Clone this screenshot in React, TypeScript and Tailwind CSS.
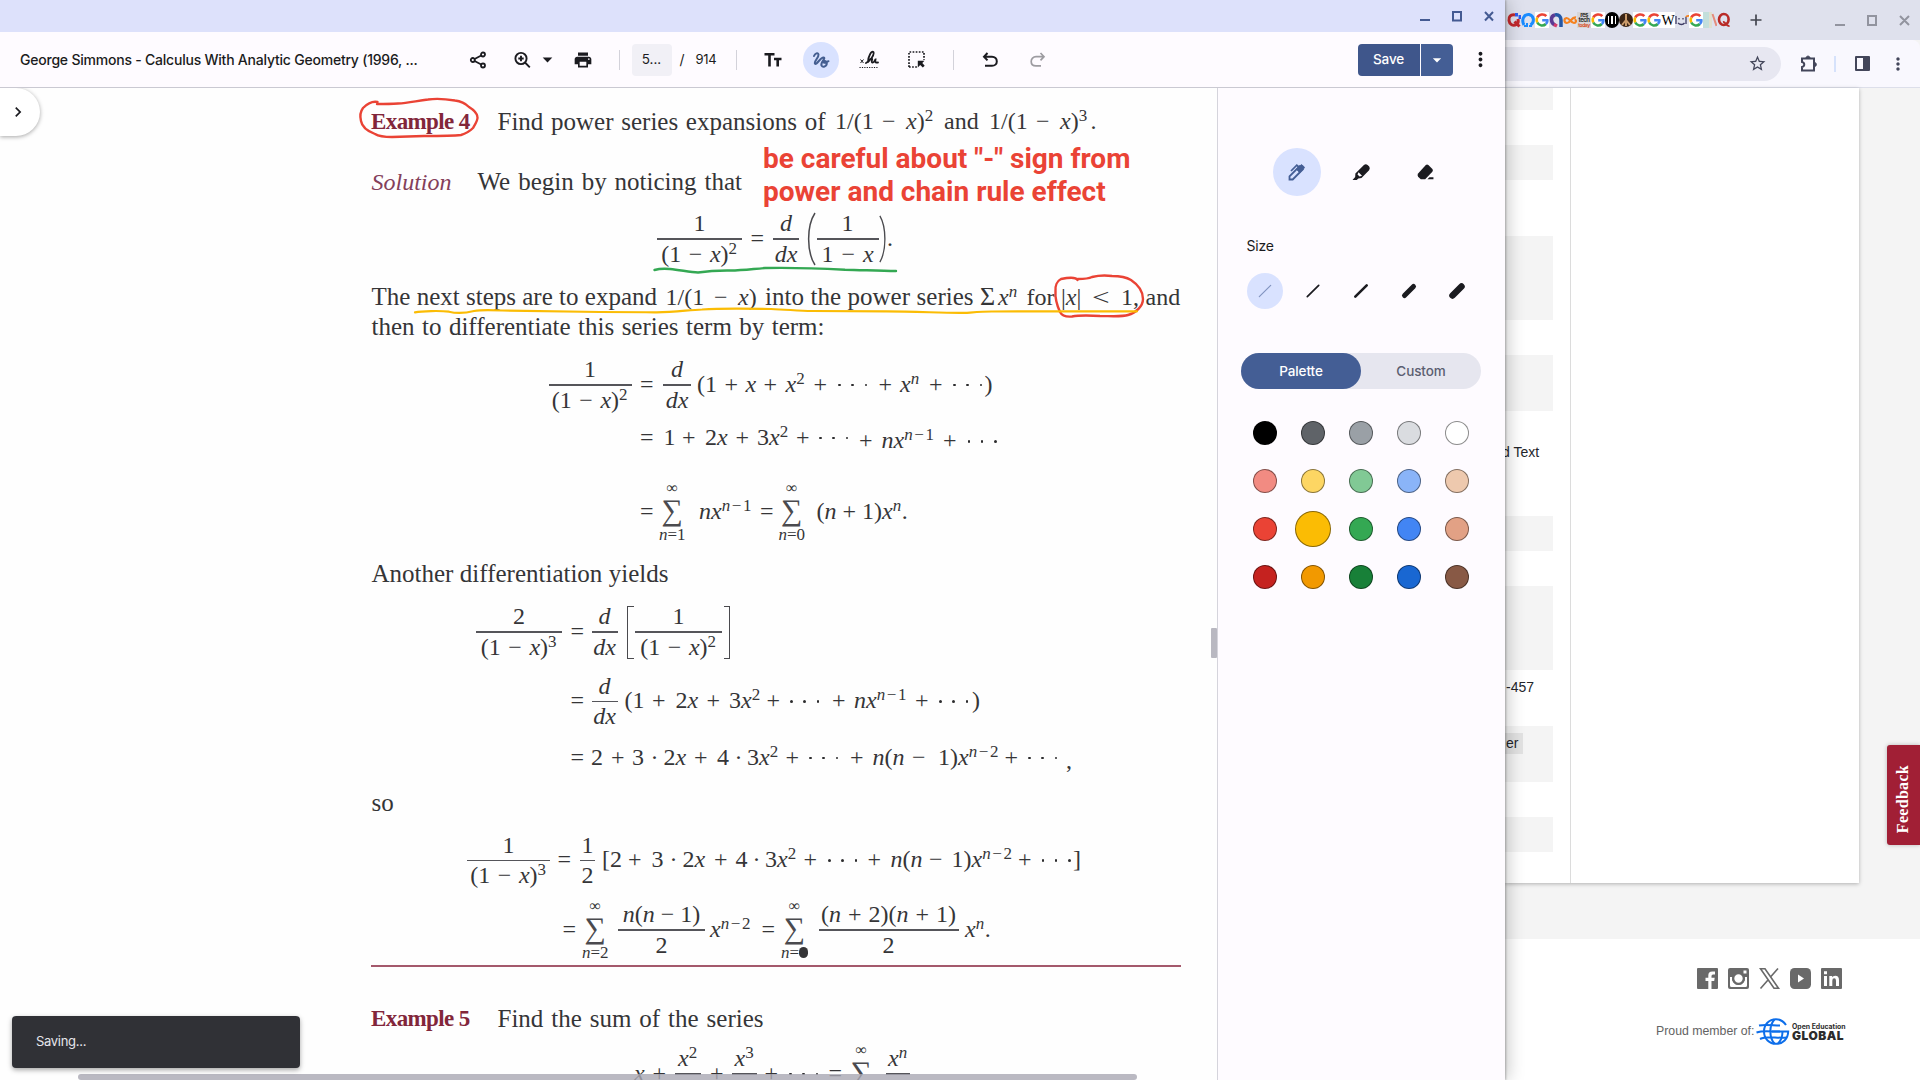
import React from "react";
import type { ReactNode } from "react";
import {
  MdArrowDropDown,
  MdPrint,
  MdMoreVert,
  MdChevronRight,
  MdStarBorder,
} from "react-icons/md";

type Token = [number, ReactNode];

const ORIGIN = 371;

/* A line of the book page: every token starts at its own column. */
function Line({ tokens, className }: { tokens: Token[]; className: string }) {
  return (
    <div className={`flex shrink-0 items-center ${className}`}>
      <span className="shrink-0" style={{ width: tokens[0][0] - ORIGIN }} />
      {tokens.map(([x, node], i) => {
        const next = tokens[i + 1];
        return (
          <span
            key={i}
            className="flex shrink-0 items-center whitespace-nowrap"
            style={next ? { width: next[0] - x } : undefined}
          >
            {node}
          </span>
        );
      })}
    </div>
  );
}

function M({ children, low }: { children: ReactNode; low?: boolean }) {
  return <span className={`block text-[24px] leading-none ${low ? "pt-[4px]" : "pb-[3px]"}`}>{children}</span>;
}

function Sup({ children }: { children: ReactNode }) {
  return <span className="relative -top-[8px] text-[17px] leading-none tracking-[0.6px]">{children}</span>;
}

/* Exponent made of several terms, set a little looser. */
function WideSup({ children }: { children: ReactNode }) {
  return <span className="relative -top-[8px] text-[17px] leading-none tracking-[1.6px]">{children}</span>;
}

const X = () => <i>x</i>;
const N = () => <i>n</i>;

function Dots({ low }: { low?: boolean }) {
  return (
    <span className={`flex w-[29px] justify-between ${low ? "pt-[7px]" : ""}`}>
      <b className="size-[2.500px] rounded-full bg-[#2c2c2e]" />
      <b className="size-[2.500px] rounded-full bg-[#2c2c2e]" />
      <b className="size-[2.500px] rounded-full bg-[#2c2c2e]" />
    </span>
  );
}

function Frac({ w, num, den }: { w: number; num: ReactNode; den: ReactNode }) {
  return (
    <span className="flex flex-col items-stretch text-center text-[24px] leading-[24px]" style={{ width: w }}>
      <span className="h-[28px] pt-px">{num}</span>
      <span className="h-[1.5px] bg-[#55555a]" />
      <span className="flex h-[28px] justify-center pt-[2px]">
        <span>{den}</span>
      </span>
    </span>
  );
}

function OneMinusX({ p }: { p: string }) {
  return (
    <span className="whitespace-nowrap [word-spacing:1.5px]">
      (1 − <X />)<Sup>{p}</Sup>
    </span>
  );
}

function Sum({ children }: { children: ReactNode }) {
  return (
    <span className="flex flex-col items-center">
      <span className="h-[12px] text-[16px] leading-[12px]">∞</span>
      <span className="my-[2px] h-[30px] text-[30px] leading-[28px] text-[#4a4a4e]">∑</span>
      <span className="h-[14px] text-[17px] leading-[14px]">{children}</span>
    </span>
  );
}

function Words({ children, className }: { children: ReactNode; className: string }) {
  return (
    <span className={`block pb-[3px] text-[25px] leading-none whitespace-nowrap [text-align-last:justify] ${className}`}>
      {children}
    </span>
  );
}

function Heading({ children }: { children: ReactNode }) {
  return (
    <span className="block w-[99px] pb-[2px] text-[23px] leading-none font-bold tracking-[-0.6px] whitespace-nowrap text-[#82263a]">
      {children}
    </span>
  );
}

const DDX = (w: number) => <Frac w={w} num={<i>d</i>} den={<i>dx</i>} />;

function Annotations() {
  return (
    <svg
      className="pointer-events-none absolute inset-0"
      width="1217"
      height="992"
      viewBox="0 88 1217 992"
      fill="none"
      strokeLinecap="round"
      strokeLinejoin="round"
    >
      <g stroke="#ea4335" strokeWidth="2.4">
        <path d="M377.500 102C373 101 368 103 363 108C360 112 360 117 361 121C362 127 367 131 375 134C380 137 386 137 392 137L424 136C440 136 452 136 461 135C468 133 470 131 473 128C476 123 478 120 477.500 117C477 113 474 110 469 107C465 103 460 101 455 100.500C446 99 438 98 428 99.500C416 101 408 103 398 103.500C390 104 384 104 377 104" />
        <path d="M1077.500 280C1076 277 1071 277 1061 279C1057 281 1055 286 1055.500 291C1055 297 1056 303 1060 312C1062 316 1066 317 1072 316.500C1080 315 1092 315.500 1100 316C1110 316 1122 317 1128 315C1136 313 1143 306 1143 299C1143 292 1140 286 1131 280C1126 277 1120 276 1112 276C1104 275 1096 276 1092 277C1088 279 1082 279 1078 279" />
      </g>
      <path
        stroke="#34a853"
        strokeWidth="2.4"
        d="M654.500 270C658 269 664 268.500 670 269C680 270 690 272 698 272.500C708 271 718 270.500 727 270.500C740 271 752 269 765 268C790 267.500 822 268.500 845 269.700C862 270 880 271 896 271"
      />
      <path
        stroke="#fbbc04"
        strokeWidth="2.2"
        d="M415 312.300C422 311 440 310.500 449 311.700C458 314 466 313 474 311C482 309.500 492 310 502 310.500C530 311 560 311.500 600 312C620 312 640 312 655 312.300C674 312.500 688 310 702 309.500C722 308 750 308.500 771 309C786 309.500 798 310.700 812 311C840 311 866 311 886 311.300C920 311.500 950 313.500 967 312.800C978 312 984 311.500 992 311.500L1137 311.300"
      />
    </svg>
  );
}

function BookPage() {
  return (
    <div className="flex w-[846px] flex-col pt-px pl-[371px] font-['Liberation_Serif',serif] text-[#353537]">
      <Line
        className="h-[67px]"
        tokens={[
          [371, <Heading>Example 4</Heading>],
          [497.500, <Words className="w-[328px]">Find power series expansions of</Words>],
          [835, <M>1/(1</M>],
          [882, <M>−</M>],
          [906, <M><X />)<Sup>2</Sup></M>],
          [944, <M>and</M>],
          [989, <M>1/(1</M>],
          [1036, <M>−</M>],
          [1060, <M><X />)<Sup>3</Sup></M>],
          [1090.500, <M>.</M>],
        ]}
      />
      <Line
        className="h-[54px]"
        tokens={[
          [371.500, <i className="pb-[3px] text-[24px] leading-none text-[#84405a]">Solution</i>],
          [477.500, <Words className="w-[264.500px]">We begin by noticing that</Words>],
        ]}
      />
      <Line
        className="h-[58px]"
        tokens={[
          [657, <Frac w={85} num="1" den={<OneMinusX p="2" />} />],
          [750.500, <M>=</M>],
          [773, DDX(26)],
          [807, <svg width="9" height="54" viewBox="0 0 9 54" fill="none" stroke="#4a4a4e" strokeWidth="1.5"><path d="M8 1C-0.500 14 -0.500 40 8 53" /></svg>],
          [816.500, <Frac w={62} num="1" den={<span className="[word-spacing:2px]">1 − <X /></span>} />],
          [879, <svg width="9" height="54" viewBox="0 0 9 54" fill="none" stroke="#4a4a4e" strokeWidth="1.5"><path d="M1 1C8.500 14 8.500 40 1 53" /></svg>],
          [887, <M>.</M>],
        ]}
      />
      <Line
        className="mt-[16px] h-[28px]"
        tokens={[
          [371.500, <Words className="w-[285.500px]">The next steps are to expand</Words>],
          [665.500, <M>1/(1</M>],
          [714, <M>−</M>],
          [738, <M><X />)</M>],
          [765, <Words className="w-[208.500px]">into the power series</Words>],
          [980, <span className="block pb-[3px] text-[26px] leading-none">Σ</span>],
          [998, <M><X /><Sup><N /></Sup></M>],
          [1026.500, <M>for</M>],
          [1061, <M>|<X />|</M>],
          [1092, <span className="block origin-left scale-x-130 pb-[2px] text-[24px] leading-none">&lt;</span>],
          [1121, <M>1,</M>],
          [1145.500, <M>and</M>],
        ]}
      />
      <Line
        className="h-[32px]"
        tokens={[[371.500, <Words className="w-[453px]">then to differentiate this series term by term:</Words>]]}
      />
      <Line
        className="h-[82px]"
        tokens={[
          [548.500, <Frac w={83} num="1" den={<OneMinusX p="2" />} />],
          [640, <M>=</M>],
          [663, DDX(28)],
          [697, <M>(1</M>],
          [724.500, <M>+</M>],
          [745.500, <M><X /></M>],
          [763.500, <M>+</M>],
          [785.500, <M><X /><Sup>2</Sup></M>],
          [813.500, <M>+</M>],
          [838, <Dots />],
          [878.500, <M>+</M>],
          [900, <M><X /><Sup><N /></Sup></M>],
          [929, <M>+</M>],
          [953, <Dots />],
          [984.500, <M>)</M>],
        ]}
      />
      <Line
        className="h-[24px]"
        tokens={[
          [640, <M>=</M>],
          [663.500, <M>1</M>],
          [682, <M>+</M>],
          [705, <M>2<X /></M>],
          [735.500, <M>+</M>],
          [757, <M>3<X /><Sup>2</Sup></M>],
          [796, <M>+</M>],
          [819, <Dots />],
          [859, <M low>+</M>],
          [881.500, <M low><N /><X /><WideSup><N />−1</WideSup></M>],
          [943, <M low>+</M>],
          [967.500, <Dots low />],
        ]}
      />
      <Line
        className="mt-[30px] h-[64px]"
        tokens={[
          [640, <M>=</M>],
          [659, <Sum><N />=1</Sum>],
          [699, <M><N /><X /><WideSup><N />−1</WideSup></M>],
          [760, <M>=</M>],
          [778.500, <Sum><N />=0</Sum>],
          [816.500, <M>(<N /> + 1)<X /><Sup><N /></Sup>.</M>],
        ]}
      />
      <Line
        className="h-[62px]"
        tokens={[[371.500, <Words className="w-[297px]">Another differentiation yields</Words>]]}
      />
      <Line
        className="h-[52px]"
        tokens={[
          [476, <Frac w={86} num="2" den={<OneMinusX p="3" />} />],
          [570.500, <M>=</M>],
          [591.500, DDX(26)],
          [627, <span className="block h-[53px] w-[7px] border-y-[1.5px] border-l-[1.5px] border-[#4a4a4e]" />],
          [635, <Frac w={87} num="1" den={<OneMinusX p="2" />} />],
          [723.500, <span className="block h-[53px] w-[6.500px] border-y-[1.5px] border-r-[1.5px] border-[#4a4a4e]" />],
        ]}
      />
      <Line
        className="mt-[13px] h-[61px]"
        tokens={[
          [570.500, <M>=</M>],
          [591.500, DDX(26)],
          [624.500, <M>(1</M>],
          [652, <M>+</M>],
          [675.500, <M>2<X /></M>],
          [706.500, <M>+</M>],
          [729, <M>3<X /><Sup>2</Sup></M>],
          [766.500, <M>+</M>],
          [790, <Dots />],
          [832, <M>+</M>],
          [854, <M><N /><X /><WideSup><N />−1</WideSup></M>],
          [915, <M>+</M>],
          [939, <Dots />],
          [972, <M>)</M>],
        ]}
      />
      <Line
        className="mt-px h-[50px]"
        tokens={[
          [570.500, <M>=</M>],
          [591, <M>2</M>],
          [611, <M>+</M>],
          [632, <M>3</M>],
          [650.500, <M>·</M>],
          [663.500, <M>2<X /></M>],
          [694, <M>+</M>],
          [717, <M>4</M>],
          [734.500, <M>·</M>],
          [747, <M>3<X /><Sup>2</Sup></M>],
          [785.500, <M>+</M>],
          [809, <Dots />],
          [850, <M>+</M>],
          [872.500, <M><N />(<N /></M>],
          [912, <M>−</M>],
          [938, <M>1)<X /><WideSup><N />−2</WideSup></M>],
          [1004.500, <M>+</M>],
          [1028, <Dots />],
          [1066, <span className="block pt-[3px] text-[24px] leading-none">,</span>],
        ]}
      />
      <Line className="h-[42px]" tokens={[[371.500, <Words className="w-[23px]">so</Words>]]} />
      <Line
        className="mt-[5px] h-[61px]"
        tokens={[
          [467, <Frac w={83} num="1" den={<OneMinusX p="3" />} />],
          [557.500, <M>=</M>],
          [580, <Frac w={15} num="1" den="2" />],
          [602, <M>[2</M>],
          [628, <M>+</M>],
          [651.500, <M>3</M>],
          [669.500, <M>·</M>],
          [682.500, <M>2<X /></M>],
          [714, <M>+</M>],
          [735.500, <M>4</M>],
          [752.500, <M>·</M>],
          [765, <M>3<X /><Sup>2</Sup></M>],
          [803.500, <M>+</M>],
          [828, <Dots />],
          [867.500, <M>+</M>],
          [890.500, <M><N />(<N /></M>],
          [929, <M>−</M>],
          [951.500, <M>1)<X /><WideSup><N />−2</WideSup></M>],
          [1018, <M>+</M>],
          [1041.500, <Dots />],
          [1073, <M>]</M>],
        ]}
      />
      <Line
        className="mt-[9px] h-[60px]"
        tokens={[
          [562.500, <M>=</M>],
          [582, <Sum><N />=2</Sum>],
          [618, <Frac w={87} num={<span><N />(<N /> − 1)</span>} den="2" />],
          [710, <M><X /><WideSup><N />−2</WideSup></M>],
          [761.500, <M>=</M>],
          [781, <Sum><N />=<span className="inline-block h-[11px] w-[9px] rounded-full bg-[#353537]" /></Sum>],
          [818.500, <Frac w={140} num={<span className="[word-spacing:1px]">(<N /> + 2)(<N /> + 1)</span>} den="2" />],
          [965, <M><X /><Sup><N /></Sup>.</M>],
        ]}
      />
      <div className="mt-[5px] h-[2px] w-[809.500px] shrink-0 bg-[#a4596c]" />
      <Line
        className="mt-[27px] h-[51px]"
        tokens={[
          [371, <Heading>Example 5</Heading>],
          [497.500, <Words className="w-[266px]">Find the sum of the series</Words>],
        ]}
      />
      <Line
        className="-mt-px h-[60px]"
        tokens={[
          [634, <M><X /></M>],
          [652.500, <M>+</M>],
          [675, <Frac w={26} num={<span><X /><Sup>2</Sup></span>} den="2" />],
          [710, <M>+</M>],
          [732, <Frac w={25} num={<span><X /><Sup>3</Sup></span>} den="3" />],
          [764.500, <M>+</M>],
          [789, <Dots />],
          [828.500, <M>=</M>],
          [848, <Sum><N />=1</Sum>],
          [886, <Frac w={24} num={<span><X /><Sup><N /></Sup></span>} den={<N />} />],
        ]}
      />
    </div>
  );
}

function UndoIcon() {
  return (
    <svg width="16" height="16" viewBox="0 0 16 16" fill="none" stroke="currentColor" strokeWidth="2">
      <path d="M5.500 1L2 4.700L5.500 8.400M2.200 4.700H10C12.800 4.700 14.800 6.800 14.800 9.400C14.800 12 12.800 13.800 10 13.800H3" />
    </svg>
  );
}

function ViewerToolbar() {
  const slot = "flex size-9 shrink-0 items-center justify-center";
  const rule = "h-5 w-px shrink-0 bg-[#d3d2da]";
  return (
    <div className="flex h-[56px] shrink-0 items-center border-b border-[#cac9d2] bg-[#fefbff] text-[#1b1b20]">
      <div className="ml-[20px] w-[439.500px] text-[14px] leading-5 font-medium tracking-[-0.22px] whitespace-nowrap">
        George Simmons - Calculus With Analytic Geometry (1996, ...
      </div>
      <div className={slot}>
        <svg width="18" height="18" viewBox="0 0 18 18" fill="none" stroke="currentColor" strokeWidth="1.800">
          <circle cx="14" cy="3.500" r="2" />
          <circle cx="14" cy="14.500" r="2" />
          <circle cx="3.800" cy="9" r="2" />
          <path d="M5.600 8L12.200 4.500M5.600 10L12.200 13.500" />
        </svg>
      </div>
      <div className={`${slot} ml-[8px]`}>
        <svg width="18" height="18" viewBox="0 0 18 18" fill="none" stroke="currentColor" strokeWidth="1.900">
          <circle cx="8" cy="7.500" r="5.600" />
          <path d="M12 11.500L16.800 16.300M8 4.800V10.200M5.300 7.500H10.700" />
        </svg>
      </div>
      <MdArrowDropDown className="-ml-[4px] size-[23px] shrink-0" />
      <div className={`${slot} ml-[6px]`}>
        <MdPrint className="size-[20px]" />
      </div>
      <div className={`${rule} ml-[18px]`} />
      <div className="ml-[12px] flex h-8 w-10 shrink-0 items-center justify-center rounded bg-[#f1f0f6] text-[13.5px]">5...</div>
      <div className="ml-[8px] text-[14px]">/</div>
      <div className="ml-[11px] w-[21px] text-[13px] tracking-[-0.3px]">914</div>
      <div className={`${rule} ml-[19px]`} />
      <div className={`${slot} ml-[18.500px]`}>
        <svg width="18" height="16" viewBox="0 0 18 16" fill="none" stroke="currentColor" strokeWidth="2.600">
          <path d="M0.500 2.300H10.500M5.500 2.300V14.500M10 7H17.500M13.700 7V14.500" />
        </svg>
      </div>
      <div className={`${slot} ml-[12px] rounded-full bg-[#d9e2ff] text-[#445e91]`}>
        <svg width="18" height="18" viewBox="0 0 18 18" fill="none" stroke="currentColor" strokeWidth="2" strokeLinecap="round">
          <path d="M2 5C3 2.500 6 1 6.500 3.500C7 6.500 1.500 10.500 3 12.700C4.500 14.500 8.500 6.200 11.500 6.500C14.500 7 8 11.500 9.500 14.500C11 17 15 15 14.800 12C14.600 9.500 11.500 9.500 11.600 11.200C12 12.400 14.500 11.200 16.500 10.200" />
        </svg>
      </div>
      <div className={`${slot} ml-[11.500px]`}>
        <svg width="20" height="20" viewBox="0 0 20 20" fill="none" stroke="currentColor">
          <path strokeWidth="1" d="M1.500 9.500L4.500 13M4.500 9.500L1.500 13" />
          <path strokeWidth="1.800" strokeLinecap="round" d="M7 13C11 11 15.500 5 14.500 2.200C12.500 0 8.800 7 9 12.500C10.500 9 13 7.500 13.200 9.200C12.500 11.500 12.500 13 14 12.500C15.500 12 16 9.500 16.500 9.500C16 12 16.500 13 19 12.500" />
          <path strokeWidth="1.200" strokeDasharray="1.200 1.200" d="M0.500 17.500H19.500" />
        </svg>
      </div>
      <div className={`${slot} ml-[12px]`}>
        <svg width="17" height="17" viewBox="0 0 17 17" fill="none">
          <path stroke="currentColor" strokeWidth="1.700" strokeDasharray="1.700 1.400" d="M1 16V1H16V9M1 16H9" />
          <path fill="currentColor" d="M9.800 9.800H16.500L14.300 12L16.700 14.700L14.800 16.600L12.200 14L9.800 16.400Z" />
        </svg>
      </div>
      <div className={`${rule} ml-[18px]`} />
      <div className={`${slot} ml-[18px]`}>
        <UndoIcon />
      </div>
      <div className={`${slot} ml-[12px] text-[#9d9ca1]`}>
        <svg width="16" height="16" viewBox="0 0 16 16" fill="none" stroke="currentColor" strokeWidth="1.700">
          <path d="M10.500 1L14 4.700L10.500 8.400M13.800 4.700H6C3.200 4.700 1.200 6.800 1.200 9.400C1.200 12 3.200 13.800 6 13.800H11" />
        </svg>
      </div>
      <div className="ml-[302px] flex h-8 w-[95px] shrink-0 overflow-hidden rounded text-white">
        <div className="flex w-[62px] items-center justify-center bg-[#3f568b] text-[13.5px] font-medium tracking-[-0.1px]">Save</div>
        <div className="ml-px flex w-[32px] items-center justify-center bg-[#445e95]">
          <MdArrowDropDown className="size-[20px]" />
        </div>
      </div>
      <div className={`${slot} ml-[10px]`}>
        <MdMoreVert className="size-[23px]" />
      </div>
    </div>
  );
}

const SWATCHES = [
  ["#000000", "#5f6368", "#9aa0a6", "#dadce0", "#ffffff"],
  ["#f28b82", "#fdd663", "#81c995", "#8ab4f8", "#eec9ae"],
  ["#ea4335", "#fbbc04", "#34a853", "#4285f4", "#e2a185"],
  ["#c5221f", "#f29900", "#188038", "#1967d2", "#885945"],
];

function Swatch({ color, selected }: { color: string; selected: boolean }) {
  return (
    <span className="flex size-[48px] items-center justify-center">
      <span
        className={`rounded-full border border-black/45 ${selected ? "size-9" : "size-6"}`}
        style={{ backgroundColor: color }}
      />
    </span>
  );
}

function AnnotationPanel() {
  return (
    <aside className="flex w-[288px] shrink-0 flex-col border-l border-[#d5d4dc] bg-[#fefbff] text-[#1b1b20]">
      <div className="mt-[60px] ml-[55px] flex gap-[16px]">
        <span className="flex size-12 items-center justify-center rounded-full bg-[#d9e2ff] text-[#445e95]">
          <svg width="18" height="18" viewBox="0 0 18 18" fill="none" stroke="currentColor">
            <path strokeWidth="1.800" d="M1.500 16.500V13.300L11.500 3.300L14.700 6.500L4.700 16.500Z" />
            <path fill="currentColor" strokeWidth="1" d="M8.500 6.300L12.800 2L14 1.800L16.200 4L16.200 5.200L11.700 9.500Z" />
            <path strokeWidth="1.700" d="M3 8L8.800 2.200L10.800 4" />
          </svg>
        </span>
        <span className="flex size-12 items-center justify-center">
          <svg width="19" height="19" viewBox="0 0 18 18">
            <path
              fill="currentColor"
              d="M11.300 2Q13 0.500 14.800 1.900L16.300 3.400Q17.500 5.100 16.200 6.800L9 14.200L6 14.800L4.500 16H0.500L3 13.300L3.200 10ZM6.200 8.800L5.200 11L7.200 12.900L9.500 12Z"
              fillRule="evenodd"
            />
          </svg>
        </span>
        <span className="flex size-12 items-center justify-center">
          <svg width="19" height="19" viewBox="0 0 18 18" fill="currentColor">
            <path d="M9.300 2Q10.500 0.900 11.700 2L15.500 5.700Q16.600 7 15.500 8.200L8.700 15.500H4.500L2 13Q0.900 11.500 2 10Z" />
            <path d="M10.800 15.500L12.800 13.500H16.500V15.500Z" />
          </svg>
        </span>
      </div>
      <div className="mt-[40px] ml-[28.500px] text-[14px] leading-[20px] tracking-[-0.2px]">Size</div>
      <div className="mt-[17px] ml-[29px] flex gap-3">
        {[1.2, 1.7, 2.6, 5, 6.500].map((w, i) => (
          <span
            key={w}
            className={`flex size-9 items-center justify-center rounded-full ${i === 0 ? "bg-[#d9e2ff] text-[#8294c0]" : ""}`}
          >
            <svg width="18" height="18" viewBox="0 0 18 18">
              <path
                d={i > 2 ? "M4.500 13.500L13.500 4.500" : "M3.300 14.700L14.700 3.300"}
                stroke="currentColor"
                strokeWidth={w}
                strokeLinecap="round"
              />
            </svg>
          </span>
        ))}
      </div>
      <div className="mt-[44px] ml-[23px] flex h-9 w-[240px] rounded-full bg-[#e6e6ef] text-[13.5px] font-medium tracking-[-0.1px] text-[#5b5e71]">
        <span className="flex w-[120px] items-center justify-center rounded-full bg-[#445e95] text-white">Palette</span>
        <span className="flex w-[120px] items-center justify-center">Custom</span>
      </div>
      <div className="mt-[20px] ml-[23px] grid w-[240px] grid-cols-5">
        {SWATCHES.flat().map((c) => (
          <Swatch key={c} color={c} selected={c === "#fbbc04"} />
        ))}
      </div>
    </aside>
  );
}

function PdfWindow() {
  return (
    <div className="z-10 flex h-full w-[1505px] shrink-0 flex-col overflow-hidden shadow-[1px_0_2px_rgba(0,0,0,0.25),3px_0_16px_rgba(0,0,0,0.22)]">
      <div className="flex h-8 shrink-0 items-start justify-end bg-[#dde1fb] pt-[10px] pr-[11px] text-[#445a92]">
        <svg width="74" height="12" viewBox="0 0 74 12" fill="none" stroke="currentColor" strokeWidth="2">
          <path d="M0 10H10M65 2L73 10.500M73 2L65 10.500" />
          <path d="M33 2H41V10.500H33Z" />
        </svg>
      </div>
      <ViewerToolbar />
      <div className="flex min-h-0 flex-1">
        <main className="relative w-[1217px] shrink-0 overflow-hidden bg-[#fefefe]">
          <BookPage />
          <Annotations />
          <div className="absolute top-[54px] left-[763px] font-[Roboto,sans-serif] text-[28px] leading-[33px] font-bold whitespace-nowrap text-[#ea4335]">
            be careful about "-" sign from
            <br />
            power and chain rule effect
          </div>
          <div className="absolute top-0 left-0 flex h-[48px] w-[40px] items-center rounded-r-full bg-white pl-[8px] text-[#1b1b20] shadow-[0_1px_4px_rgba(0,0,0,0.35)]">
            <MdChevronRight className="size-[20px]" />
          </div>
          <div className="absolute right-0 bottom-[422px] h-[30px] w-[6px] rounded-[1px] bg-[#b9b8c1]" />
          <div className="absolute bottom-0 left-[78px] h-[6px] w-[1059px] rounded-full bg-[#a9a8b3]/80" />
          <div className="absolute bottom-[12px] left-[12px] flex h-[52px] w-[288px] items-center rounded bg-[#303136] pl-6 text-[13px] tracking-[-0.3px] text-[#e6e5eb] shadow-[0_2px_5px_rgba(0,0,0,0.35)]">
            Saving...
          </div>
        </main>
        <AnnotationPanel />
      </div>
    </div>
  );
}

function GoogleG() {
  return (
    <svg width="14" height="16" viewBox="0 0 14 16" className="shrink-0 bg-white" fill="none" strokeWidth="2.600">
      <path stroke="#ea4335" d="M2.300 5.500C4 2 9 1.500 11.300 4.200" />
      <path stroke="#fbbc04" d="M2.300 5.500C1.600 7 1.600 9 2.300 10.500" />
      <path stroke="#34a853" d="M2.300 10.500C4 14 8.500 14.300 10.800 12" />
      <path stroke="#4285f4" d="M10.800 12C12 11 12.500 9.500 12.300 8.300H7.200" />
    </svg>
  );
}

function Favicons() {
  const box = "flex h-4 w-[14px] shrink-0 items-center justify-center overflow-hidden";
  return (
    <div className="flex h-4 items-center">
      <svg className="shrink-0" width="14" height="16" viewBox="0 0 14 16" fill="none" stroke="#c2282d" strokeWidth="3"><path d="M8 3C3.500 2 1.500 5 2 8.500C2.500 12.500 6 14.500 9.500 12.500C11 11.500 11.500 9 11 7M7.500 9.500L12.500 14.500" /><path stroke="#2f5ef0" d="M9.500 1V4.500M13 3V7" /></svg>
      <svg className="shrink-0" width="14" height="16" viewBox="0 0 14 16" fill="none" strokeWidth="3"><path stroke="#1a8cff" d="M3 13C0 8 3 2 8 2.500C13 3.500 14 10 9.500 13" /><path stroke="#1a8cff" strokeWidth="2" d="M3 14H6V11M8 14H11" /></svg>
      <GoogleG />
      <svg className="shrink-0" width="14" height="16" viewBox="0 0 14 16" fill="none" strokeWidth="3.500"><path stroke="#5b3a93" d="M6 13C1.500 11 1 4 6 3" /><path stroke="#2457a6" d="M6 3C10 2 12 5 12 8V15" /><path stroke="#d63b6b" d="M5 12.500L8 14" /></svg>
      <svg className="shrink-0" width="14" height="16" viewBox="0 0 14 16" fill="none" stroke="#f58220" strokeWidth="2.200"><path d="M13 5.500C9 4.500 7 11 4 11C1 11 0.500 6.500 3.500 6C6.500 6 8 11 11 11C13.500 11 13.500 7.500 11.500 7.500" /></svg>
      <span className={`${box} flex-col bg-[#d7d5d8] text-[6px] leading-[5.500px] font-bold tracking-[-0.5px] text-[#333]`}>
        <span>res</span>
        <span>tech</span>
        <span className="text-[5px] text-[#d9532c]">today</span>
      </span>
      <GoogleG />
      <span className={`${box} gap-[2px] rounded-full bg-black`}>
        <b className="h-2 w-[1.500px] bg-white" />
        <b className="h-2 w-[1.500px] bg-white" />
        <b className="h-2 w-[1.500px] bg-white" />
      </span>
      <svg className="shrink-0" width="14" height="16" viewBox="0 0 14 16"><circle cx="7" cy="8" r="7" fill="#3b2415" /><path d="M7 2V14M7 8L3 13M7 8L11 13" stroke="#c99a6a" strokeWidth="2" fill="none" /></svg>
      <GoogleG />
      <GoogleG />
      <span className={`${box} bg-white font-['Liberation_Serif',serif] text-[14px] text-black`}>W</span>
      <svg className="shrink-0" width="14" height="16" viewBox="0 0 14 16" fill="none"><path stroke="#3d3a63" strokeWidth="1.300" d="M1 4V12M3 11C5 13 8 13 9.500 11M4 6V7.500M8 6V7.500M11 5V12" /><path stroke="#f58220" strokeWidth="1.800" d="M11 5C11.500 4 12.500 3.800 14 4" /></svg>
      <GoogleG />
      <svg className="shrink-0" width="14" height="16" viewBox="0 0 14 16"><path d="M0 0H6V16H0Z" fill="#c3dfdb" /><path d="M6 0H9V16H6Z" fill="#dfe0cf" /><path d="M9.500 2L13.500 14" stroke="#e48c7b" strokeWidth="2" /></svg>
      <svg className="shrink-0" width="14" height="16" viewBox="0 0 14 16" fill="none" stroke="#b92b27" strokeWidth="2.600"><ellipse cx="6.800" cy="7.500" rx="4.800" ry="5.500" /><path d="M6 10C8.500 9.500 9 14.500 12.500 14" strokeWidth="2" /></svg>
    </div>
  );
}

const ROWS: [string, string][] = [
  ["h-[22px] bg-[#f4f4f4]", ""],
  ["h-[35px]", ""],
  ["h-[35px] bg-[#f4f4f4]", ""],
  ["h-[56px]", ""],
  ["h-[84px] bg-[#f4f4f4]", ""],
  ["h-[35px]", ""],
  ["h-[56px] bg-[#f4f4f4]", ""],
  ["h-[105px] pt-[31px]", "d Text"],
  ["h-[35px] bg-[#f4f4f4]", ""],
  ["h-[35px]", ""],
  ["h-[84px] bg-[#f4f4f4]", ""],
  ["h-[56px] pt-[7px]", "-457"],
  ["h-[56px] bg-[#f4f4f4] pt-[7px]", "er"],
  ["h-[35px]", ""],
  ["h-[35px] bg-[#f4f4f4]", ""],
];

function Cell({ text }: { text: string }) {
  if (text === "er") return <span className="block w-[18px] bg-[#e2e2e2] pl-px">er</span>;
  if (text === "d Text") return <span className="-ml-[3px] block">{text}</span>;
  return <span className="pl-px">{text}</span>;
}

function Social() {
  return (
    <div className="ml-[192px] flex gap-[10px] text-[#696969]">
      <svg width="21" height="21" viewBox="0 0 21 21"><path fill="currentColor" d="M1 0H20Q21 0 21 1V20Q21 21 20 21H14.500V13H17.200L17.700 9.700H14.500V8Q14.500 6.500 16 6.500H18V3.500H15.200Q11.300 3.500 11.300 7.500V9.700H8.500V13H11.300V21H1Q0 21 0 20V1Q0 0 1 0Z" /></svg>
      <svg width="21" height="21" viewBox="0 0 21 21"><path fill="currentColor" d="M2 0H19Q21 0 21 2V19Q21 21 19 21H2Q0 21 0 19V2Q0 0 2 0Z" /><path fill="#fff" d="M2 9H4.200A6.500 6.500 0 1 0 16.800 9H19V17.500Q19 19 17.500 19H3.500Q2 19 2 17.500ZM15.500 2.500H18.500V5.500H15.500Z" /><circle cx="10.500" cy="10.500" r="5.300" fill="#fff" stroke="currentColor" strokeWidth="2.200" /></svg>
      <svg width="21" height="21" viewBox="0 0 21 21" fill="none" stroke="currentColor" strokeWidth="1.600"><path d="M1.500 0.800H6L19.500 20.200H15ZM19 0.500L11.500 9M9 12L1.500 20.500" /></svg>
      <svg width="21" height="21" viewBox="0 0 21 21"><rect width="21" height="21" rx="4.500" fill="currentColor" /><path d="M8 6.500L14 10.500L8 14.500Z" fill="#fff" /></svg>
      <svg width="21" height="21" viewBox="0 0 21 21"><rect width="21" height="21" rx="1" fill="currentColor" /><path d="M3 8H6V18H3ZM3 3.300H6V6.300H3ZM8.300 8H11.200V9.300Q12 7.700 14.200 7.700Q18 7.700 18 12V18H15V12.700Q15 10.300 13.200 10.300Q11.300 10.300 11.300 12.700V18H8.300Z" fill="#fff" /></svg>
    </div>
  );
}

function Browser() {
  return (
    <div className="flex min-w-0 flex-1 flex-col bg-[#f4f4f4]">
      <div className="flex h-[40px] shrink-0 items-center bg-[#dfe1ed] text-[#43464f]">
        <div className="ml-[2px] flex flex-1 items-center">
          <Favicons />
          <svg className="ml-[19px]" width="12" height="12" viewBox="0 0 12 12" stroke="currentColor" strokeWidth="1.700"><path d="M6 0.500V11.500M0.500 6H11.500" /></svg>
        </div>
        <svg className="mr-[10px]" width="75" height="14" viewBox="0 0 75 14" fill="none" stroke="#92949f" strokeWidth="2">
          <path d="M0 12H10M65 3L74 12M74 3L65 12M33 3H41V12H33Z" />
        </svg>
      </div>
      <div className="flex h-[48px] shrink-0 items-center rounded-tr-lg border-b border-[#dddfea] bg-[#f9f8fe] text-[#43465a]">
        <div className="flex h-[34px] w-[276px] items-center justify-end rounded-r-full bg-[#e7e7f1] pr-[14px]">
          <MdStarBorder className="size-[19px]" />
        </div>
        <svg className="ml-[19px]" width="18" height="18" viewBox="0 0 18 18" fill="none" stroke="currentColor" strokeWidth="2">
          <path d="M2 3.500H14V15.500H2V12C5 11.500 5 7.500 2 7Z" />
          <path d="M6 3C6 0.500 10 0.500 10 3ZM14.500 7.500C17 7.500 17 11.500 14.500 11.500Z" fill="currentColor" strokeWidth="1" />
        </svg>
        <span className="ml-[16px] h-4 w-[2px] bg-[#d6e2fb]" />
        <svg className="ml-[19px]" width="15" height="15" viewBox="0 0 15 15" fill="currentColor"><path fillRule="evenodd" d="M1 0H14Q15 0 15 1V14Q15 15 14 15H1Q0 15 0 14V1Q0 0 1 0ZM2 2V13H8V2Z" /></svg>
        <MdMoreVert className="ml-[18px] size-[20px]" />
      </div>
      <div className="flex min-h-0 flex-1 flex-col">
        <div className="flex h-[795px] shrink-0">
          <div className="flex w-[354px] bg-white shadow-[0_1px_4px_rgba(0,0,0,0.28)]">
            <div className="flex w-[66px] flex-col border-r border-[#dcdcdc]">
              {ROWS.map(([cls, text], i) => (
                <div key={i} className={`w-[48px] shrink-0 font-['Liberation_Sans',sans-serif] text-[14px] leading-[21px] whitespace-nowrap text-[#24262b] ${cls}`}>
                  {text && <Cell text={text} />}
                </div>
              ))}
            </div>
          </div>
          <div className="mt-[657px] ml-[28px] flex h-[100px] w-[33px] items-center justify-center rounded-l-[3px] bg-[#a11f35] shadow-[0_0_4px_rgba(0,0,0,0.25)]">
            <span className="rotate-180 pb-[8px] pl-[2px] font-['Liberation_Serif',serif] text-[16px] font-bold tracking-[0.3px] text-white [writing-mode:vertical-rl]">
              Feedback
            </span>
          </div>
        </div>
        <footer className="mt-[56px] flex flex-1 flex-col bg-white pt-[29px]">
          <Social />
          <div className="mt-[29px] ml-[151px] flex items-center">
            <span className="w-[100px] font-['Liberation_Sans',sans-serif] text-[12.300px] leading-[27px] whitespace-nowrap text-[#636363]">
              Proud member of:
            </span>
            <svg className="shrink-0" width="34" height="27" viewBox="0 0 34 27" fill="none" stroke="#0d6eea" strokeWidth="2">
              <path d="M30 7C27 2.500 23.500 1.200 20 1.200C13 1.200 8 6.500 8 13.500C8 21 13.500 25.800 20 25.800C27 25.800 32 21 32.200 13.500H16" />
              <path d="M18.500 1.500C13 7 13 20 18.500 25.500M22 25.500C25.500 22 26.500 18 26.500 13.500M3 7.500C10 6 17 7.500 24 7.500M0.500 14.500C8 12 16 14 24 13.500M4 21C11 17.500 20 20.500 30.500 19.500" />
            </svg>
            <span className="ml-[2px] flex flex-col text-[#2c2c2c]">
              <span className="text-[6.900px] leading-[8px] font-bold whitespace-nowrap">Open Education</span>
              <span className="text-[12px] leading-[10px] font-black tracking-[0.5px]">GLOBAL</span>
            </span>
          </div>
        </footer>
      </div>
    </div>
  );
}

export default function App() {
  return (
    <div className="flex h-[1080px] w-[1920px] overflow-hidden bg-white font-[Inter,sans-serif]">
      <PdfWindow />
      <Browser />
    </div>
  );
}
